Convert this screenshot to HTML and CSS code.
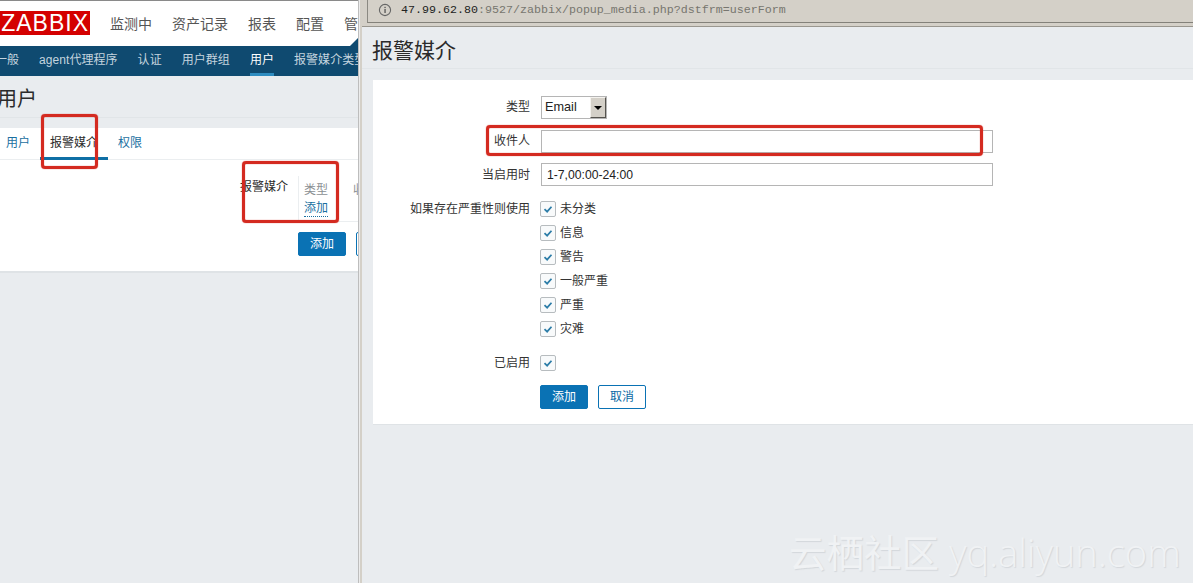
FILE: index.html
```html
<!DOCTYPE html>
<html lang="zh">
<head>
<meta charset="utf-8">
<title>报警媒介</title>
<link rel="stylesheet" href="styles.css">
</head>
<body>
<div class="stage">
  <section class="left">
    <header class="head">
      <div class="logo">ZABBIX</div>
      <nav class="mainnav"><span>监测中</span><span>资产记录</span><span>报表</span><span>配置</span><span>管理</span></nav>
      <i class="notch"></i>
    </header>
    <nav class="subnav"><span>一般</span><span>agent代理程序</span><span>认证</span><span>用户群组</span><span class="on">用户</span><span>报警媒介类型</span></nav>
    <h1 class="ltitle">用户</h1>
    <div class="lcard">
      <div class="tabs"><a>用户</a><a class="on">报警媒介</a><a>权限</a></div>
      <div class="lform">
        <div class="lrow">
          <span class="llabel">报警媒介</span>
          <div class="mtable">
            <div class="mcol"><span class="mhead">类型</span><a class="madd">添加</a></div>
            <div class="mcol"><span class="mhead">收件人</span></div>
          </div>
        </div>
        <div class="lbtns"><button class="btn primary">添加</button><button class="btn ghost">取消</button></div>
      </div>
    </div>
  </section>

  <div class="split"></div>

  <section class="right">
    <div class="urlbar">
      <div class="urlinner">
        <svg class="info" width="14" height="14" viewBox="0 0 14 14"><circle cx="7" cy="7" r="5.6" fill="none" stroke="#666" stroke-width="1.1"/><rect x="6.4" y="6" width="1.3" height="4" fill="#555"/><rect x="6.4" y="3.8" width="1.3" height="1.3" fill="#555"/></svg>
        <span class="url"><b>47.99.62.80</b>:9527/zabbix/popup_media.php?dstfrm=userForm</span>
      </div>
    </div>
    <h1 class="rtitle">报警媒介</h1>
    <form class="rcard">
      <div class="row r-type">
        <label class="lab">类型</label>
        <div class="select"><span>Email</span><i class="arrowbtn"><i class="tri"></i></i></div>
      </div>
      <div class="row r-to">
        <label class="lab">收件人</label>
        <div class="input"></div>
      </div>
      <div class="row r-time">
        <label class="lab">当启用时</label>
        <div class="input">1-7,00:00-24:00</div>
      </div>
      <div class="row r-sev">
        <label class="lab">如果存在严重性则使用</label>
        <ul class="checks">
          <li><svg class="cb" viewBox="0 0 16 16"><path d="M4 8.2l3 2.8 5-5.6" /></svg>未分类</li>
          <li><svg class="cb" viewBox="0 0 16 16"><path d="M4 8.2l3 2.8 5-5.6" /></svg>信息</li>
          <li><svg class="cb" viewBox="0 0 16 16"><path d="M4 8.2l3 2.8 5-5.6" /></svg>警告</li>
          <li><svg class="cb" viewBox="0 0 16 16"><path d="M4 8.2l3 2.8 5-5.6" /></svg>一般严重</li>
          <li><svg class="cb" viewBox="0 0 16 16"><path d="M4 8.2l3 2.8 5-5.6" /></svg>严重</li>
          <li><svg class="cb" viewBox="0 0 16 16"><path d="M4 8.2l3 2.8 5-5.6" /></svg>灾难</li>
        </ul>
      </div>
      <div class="row r-on">
        <label class="lab">已启用</label>
        <svg class="cb" viewBox="0 0 16 16"><path d="M4 8.2l3 2.8 5-5.6" /></svg>
      </div>
      <div class="row r-btn">
        <span class="lab"></span>
        <div class="rbtns"><button type="button" class="btn primary">添加</button><button type="button" class="btn ghost">取消</button></div>
      </div>
    </form>
  </section>

  <div class="mark box1"></div>
  <div class="mark box2"></div>
  <div class="mark box3"></div>
  <div class="water"><span class="wcn">云栖社区</span><span class="wen">yq.aliyun.com</span></div>
</div>
</body>
</html>
```
FILE: styles.css
```css
* { box-sizing: border-box; }
html, body { margin: 0; padding: 0; }
body {
  width: 1193px; height: 583px; overflow: hidden;
  font-family: "Liberation Sans", "Noto Sans CJK SC", sans-serif;
  font-size: 12px; color: #2b2b2b; background: #e9ecef;
}
.stage { position: relative; display: flex; width: 1193px; height: 583px; overflow: hidden; }
h1 { margin: 0; font-weight: 400; }

/* left window */
.left { width: 358px; flex: none; overflow: hidden; background: #e9ecef; border-top: 1px solid #8a8a8a; }
.head { position: relative; height: 45px; background: #fff; display: flex; align-items: flex-start; }
.logo {
  width: 90px; height: 24px; margin-top: 10px; flex: none; background: #d40000; color: #fff;
  font-size: 23px; line-height: 24px; letter-spacing: 1px; text-align: right; padding-right: 1px; overflow: hidden;
}
.mainnav { display: flex; gap: 20px; margin-left: 20px; margin-top: 13px; font-size: 14px; line-height: 20px; color: #555; white-space: nowrap; }
.notch { position: absolute; right: 0; bottom: 0; width: 8px; height: 8px; background: #0f4a70; clip-path: polygon(100% 0, 100% 100%, 0 100%); }
.subnav { height: 30px; background: #0f4a70; display: flex; gap: 20px; margin-left: -5px; font-size: 12px; letter-spacing: .05px; line-height: 29px; color: #c4d4df; white-space: nowrap; }
.subnav .on { color: #fff; border-bottom: 3px solid #2e8cc0; height: 30px; }
.ltitle { font-size: 20px; line-height: 28px; margin-top: 9px; height: 33px; color: #2b2b2b; border-bottom: 1px solid #e1e5e8; text-indent: -3px; }
.lcard { margin-top: 10px; height: 145px; background: #fff; border-bottom: 2px solid #dfe3e6; }
.tabs { height: 32px; display: flex; padding-left: 6px; border-bottom: 1px solid #ebeef0; line-height: 31px; gap: 20px; color: #1a6f9f; }
.tabs .on { position: relative; color: #2b2b2b; }
.tabs .on::after { content: ""; position: absolute; left: -10px; right: -10px; top: 29px; height: 3px; background: #0f6fa5; }
.lform { padding: 16px 0 0 240px; width: 480px; }
.lrow { display: flex; height: 46px; }
.llabel { width: 58px; line-height: 20px; flex: none; padding-top: 1px; }
.mtable { display: flex; width: 180px; height: 46px; border-left: 1px solid #ebeef0; border-bottom: 1px solid #ebeef0; padding: 5px 0 0 5px; gap: 25px; }
.mcol { display: flex; flex-direction: column; align-items: flex-start; line-height: 18px; white-space: nowrap; }
.mhead { color: #8a8f93; }
.madd { color: #1a6f9f; border-bottom: 1px dotted #1a6f9f; line-height: 16px; margin-top: 1px; }
.lbtns { display: flex; gap: 10px; margin: 10px 0 0 58px; }

.btn { width: 48px; height: 24px; padding: 0; border-radius: 2px; font: inherit; font-size: 12px; line-height: 22px; flex: none; }
.primary { background: #0a72b4; border: 1px solid #0a72b4; color: #fff; }
.ghost { background: #fff; border: 1px solid #0a72b4; color: #0a6aa5; }

/* splitter */
.split { width: 4px; flex: none; background: linear-gradient(90deg, #bdbdbd 0, #bdbdbd 1px, #ececec 1px, #ececec 2px, #d4d0c8 2px); }

/* right window */
.right { flex: 1; min-width: 0; display: flex; flex-direction: column; }
.urlbar { height: 27px; flex: none; background: #d4d0c8; padding-left: 5px; border-bottom: 1px solid #9a978f; }
.urlinner { height: 23px; border-left: 1px solid #8b8982; border-bottom: 1px solid #83817a; display: flex; align-items: center; padding: 0 0 3px 10px; }
.info { flex: none; }
.url { margin-left: 9px; font-family: "Liberation Mono", monospace; font-size: 11.67px; color: #77766f; white-space: nowrap; }
.url b { font-weight: 400; color: #222; }
.rtitle { height: 42px; font-size: 21px; line-height: 47px; padding-left: 10px; border-bottom: 1px solid #e1e5e8; color: #2b2b2b; flex: none; }
.rcard {
  margin: 11px 0 0 11px; height: 345px; background: #fff; border-bottom: 1px solid #dfe3e6; padding-top: 16px;
}
.row { display: flex; align-items: flex-start; }
.lab { width: 157px; flex: none; text-align: right; line-height: 22px; margin-right: 11px; white-space: nowrap; color: #333; }
.select { position: relative; width: 66px; height: 23px; border: 1px solid #b5b5b5; background: #fff; padding-left: 3px; font-size: 12.7px; line-height: 21px; color: #222; }
.arrowbtn { position: absolute; right: 0; top: 0; width: 16px; height: 21px; background: #d4d0c8; border: 1px solid; border-color: #f4f2ee #55534e #55534e #f4f2ee; display: flex; align-items: center; justify-content: center; }
.tri { width: 0; height: 0; border: 4px solid transparent; border-top-color: #000; border-bottom: 0; }
.input { width: 452px; height: 23px; border: 1px solid #b5b5b5; background: #fff; padding-left: 5px; font-size: 12.2px; line-height: 23px; color: #222; }
.r-to { margin-top: 11px; }
.r-time { margin-top: 10px; }
.r-time .lab { line-height: 24px; }
.r-sev { margin-top: 14px; }
.r-sev .lab { line-height: 16px; }
.checks { list-style: none; margin: 0 0 0 -1px; padding: 0; display: flex; flex-direction: column; gap: 8px; }
.checks li { display: flex; align-items: center; height: 16px; line-height: 16px; white-space: nowrap; color: #333; }
.cb { width: 16px; height: 16px; flex: none; margin-right: 4px; border: 1px solid #b7bcbf; border-radius: 2px; background: #f8fafb; fill: none; stroke: #2d7da8; stroke-width: 2; }
.r-on { margin-top: 18px; }
.r-on .lab { line-height: 16px; height: 16px; }
.r-on .cb { margin-left: -1px; }
.r-btn { margin-top: 14px; }
.rbtns { display: flex; gap: 10px; margin-left: -1px; }

/* annotation overlays */
.mark { position: absolute; border: 3px solid #d42a20; border-radius: 4px; box-shadow: 0 0 1px #d42a20, inset 0 0 1px #d42a20; pointer-events: none; }
.box1 { left: 41px; top: 114px; width: 57px; height: 55px; }
.box2 { left: 242px; top: 161px; width: 97px; height: 62px; }
.box3 { left: 486px; top: 125px; width: 497px; height: 31px; }
.water { position: absolute; left: 789px; top: 529px; white-space: nowrap; color: #f0f2f4; text-shadow: 1px 1px 1px #d3d7db; line-height: 44px; }
.wcn { font-size: 37.5px; font-family: "Noto Sans CJK SC", sans-serif; }
.wen { font-family: "Open Sans", sans-serif; font-weight: 300; font-size: 38px; margin-left: 10px; }
```
